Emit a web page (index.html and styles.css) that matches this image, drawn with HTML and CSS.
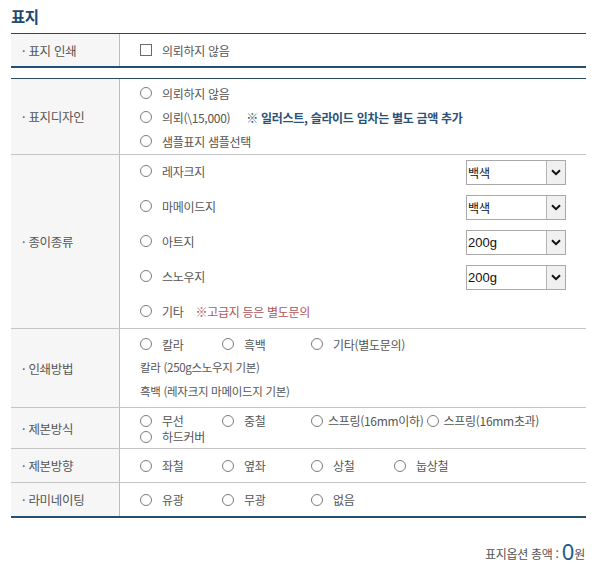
FILE: index.html
```html
<!DOCTYPE html>
<html lang="ko">
<head>
<meta charset="utf-8">
<title>표지</title>
<link rel="stylesheet" href="styles.css">
</head>
<body>
<div class="wrap">
  <h2 class="title">표지</h2>

  <div class="tbl tbl-top">
    <div class="row row-print">
      <div class="th">· 표지 인쇄</div>
      <div class="td">
        <label class="opt"><input type="checkbox" class="chk">의뢰하지 않음</label>
      </div>
    </div>
  </div>

  <div class="tbl tbl-main">
    <div class="row row-design">
      <div class="th">· 표지디자인</div>
      <div class="td col">
        <label class="opt line24"><input type="radio" name="design" class="rd">의뢰하지 않음</label>
        <div class="line24"><label class="opt"><input type="radio" name="design" class="rd">의뢰(\15,000)</label><span class="note-blue">※ 일러스트, 슬라이드 임차는 별도 금액 추가</span></div>
        <label class="opt line24"><input type="radio" name="design" class="rd">샘플표지 샘플선택</label>
      </div>
    </div>

    <div class="row row-paper">
      <div class="th">· 종이종류</div>
      <div class="td col paper">
        <div class="paper-line">
          <label class="opt"><input type="radio" name="paper" class="rd">레자크지</label>
          <div class="sel"><span class="sel-val">백색</span><span class="sel-btn"><svg width="10" height="7" viewBox="0 0 10 7"><path d="M1 1.2 L5 5.2 L9 1.2" fill="none" stroke="#111" stroke-width="2"/></svg></span></div>
        </div>
        <div class="paper-line">
          <label class="opt"><input type="radio" name="paper" class="rd">마메이드지</label>
          <div class="sel"><span class="sel-val">백색</span><span class="sel-btn"><svg width="10" height="7" viewBox="0 0 10 7"><path d="M1 1.2 L5 5.2 L9 1.2" fill="none" stroke="#111" stroke-width="2"/></svg></span></div>
        </div>
        <div class="paper-line">
          <label class="opt"><input type="radio" name="paper" class="rd">아트지</label>
          <div class="sel"><span class="sel-val num">200g</span><span class="sel-btn"><svg width="10" height="7" viewBox="0 0 10 7"><path d="M1 1.2 L5 5.2 L9 1.2" fill="none" stroke="#111" stroke-width="2"/></svg></span></div>
        </div>
        <div class="paper-line">
          <label class="opt"><input type="radio" name="paper" class="rd">스노우지</label>
          <div class="sel"><span class="sel-val num">200g</span><span class="sel-btn"><svg width="10" height="7" viewBox="0 0 10 7"><path d="M1 1.2 L5 5.2 L9 1.2" fill="none" stroke="#111" stroke-width="2"/></svg></span></div>
        </div>
        <div class="paper-line">
          <label class="opt"><input type="radio" name="paper" class="rd">기타</label><span class="note-red">※고급지 등은 별도문의</span>
        </div>
      </div>
    </div>

    <div class="row row-method">
      <div class="th">· 인쇄방법</div>
      <div class="td col">
        <div class="opts method-opts">
          <label class="opt"><input type="radio" name="method" class="rd">칼라</label>
          <label class="opt"><input type="radio" name="method" class="rd">흑백</label>
          <label class="opt"><input type="radio" name="method" class="rd">기타(별도문의)</label>
        </div>
        <div class="desc">칼라 (250g스노우지 기본)</div>
        <div class="desc">흑백 (레자크지 마메이드지 기본)</div>
      </div>
    </div>

    <div class="row row-bind">
      <div class="th">· 제본방식</div>
      <div class="td">
        <div class="opts bind-opts">
          <label class="opt"><input type="radio" name="bind" class="rd">무선</label>
          <label class="opt"><input type="radio" name="bind" class="rd">중철</label>
          <label class="opt tight"><input type="radio" name="bind" class="rd">스프링(16mm이하)</label>
          <label class="opt tight"><input type="radio" name="bind" class="rd">스프링(16mm초과)</label>
          <label class="opt"><input type="radio" name="bind" class="rd">하드커버</label>
        </div>
      </div>
    </div>

    <div class="row row-single">
      <div class="th">· 제본방향</div>
      <div class="td">
        <div class="opts">
          <label class="opt"><input type="radio" name="dir" class="rd">좌철</label>
          <label class="opt"><input type="radio" name="dir" class="rd">옆좌</label>
          <label class="opt"><input type="radio" name="dir" class="rd">상철</label>
          <label class="opt"><input type="radio" name="dir" class="rd">눕상철</label>
        </div>
      </div>
    </div>

    <div class="row row-single">
      <div class="th">· 라미네이팅</div>
      <div class="td">
        <div class="opts">
          <label class="opt"><input type="radio" name="lami" class="rd">유광</label>
          <label class="opt"><input type="radio" name="lami" class="rd">무광</label>
          <label class="opt"><input type="radio" name="lami" class="rd">없음</label>
        </div>
      </div>
    </div>
  </div>

  <div class="total">표지옵션 총액 : <strong class="total-num">0</strong>원</div>
</div>
</body>
</html>
```

FILE: styles.css
```css
html, body {
  margin: 0;
  padding: 0;
  background: #fff;
}
body {
  font-family: "Noto Sans CJK KR", "Noto Sans", sans-serif;
  font-size: 12px;
  color: #555;
  letter-spacing: -0.3px;
}
.wrap {
  width: 575px;
  margin-left: 11px;
}
.title {
  margin: 0;
  padding-top: 6px;
  height: 27px;
  font-size: 15.5px;
  line-height: 20px;
  font-weight: bold;
  color: #1f4a70;
  letter-spacing: -0.5px;
}
.tbl {
  border-top: 1px solid #2a4a62;
  border-bottom: 2px solid #234f70;
}
.tbl-main {
  margin-top: 10px;
}
.row {
  display: grid;
  grid-template-columns: 109px 1fr;
  border-bottom: 1px solid #c4c4c4;
}
.row:last-child {
  border-bottom: none;
}
.th {
  background: #f6f6f6;
  border-right: 1px solid #bdbdbd;
  display: flex;
  align-items: center;
  padding-left: 11px;
  color: #555;
  font-size: 12.5px;
}
.td {
  padding: 0 20px 0 20px;
  display: flex;
  align-items: center;
}
.td.col {
  flex-direction: column;
  align-items: stretch;
  justify-content: center;
}
.row-print .td {
  height: 32px;
}
.opt {
  display: inline-flex;
  align-items: center;
  white-space: nowrap;
}
.rd, .chk {
  appearance: none;
  -webkit-appearance: none;
  margin: 0 10px 0 0;
  width: 12px;
  height: 12px;
  border: 1px solid #7c7c7c;
  background: #fff;
  flex: none;
  box-sizing: border-box;
}
.rd {
  border-radius: 50%;
}
.chk {
  width: 12px;
  height: 12px;
  border-color: #6a6a6a;
  margin-right: 10px;
}

/* design row */
.row-design .td {
  padding-top: 2px;
  padding-bottom: 1px;
}
.line24 {
  height: 24px;
  display: flex;
  align-items: center;
}
.note-blue {
  margin-left: 16px;
  color: #2b5277;
  font-weight: bold;
  letter-spacing: -0.3px;
}

/* paper row */
.paper {
  padding-top: 4px;
  padding-bottom: 5px;
  gap: 11px;
}
.paper-line {
  height: 24px;
  display: flex;
  align-items: center;
  justify-content: space-between;
}
.paper-line:last-child {
  justify-content: flex-start;
}
.note-red {
  margin-left: 12px;
  color: #b05555;
}
.sel {
  width: 100px;
  height: 25px;
  box-sizing: border-box;
  border: 1px solid #a9a9a9;
  display: flex;
  background: #fff;
  margin-top: 2px;
}
.sel-val {
  flex: 1;
  display: flex;
  align-items: center;
  padding-left: 1px;
  font-family: "DejaVu Sans", "Noto Sans CJK KR", sans-serif;
  font-size: 12px;
  color: #111;
  letter-spacing: 0;
}
.sel-val.num {
  font-family: "Liberation Sans", Arial, sans-serif;
  font-size: 13px;
}
.sel-btn {
  width: 18px;
  border-left: 1px solid #b5b5b5;
  background: #f0f0f0;
  display: flex;
  align-items: center;
  justify-content: center;
}

/* multi options */
.opts {
  display: flex;
  flex-wrap: wrap;
}
.opts .opt {
  min-width: 82px;
}
.opts .opt:nth-child(2) {
  min-width: 89px;
}
.opts .opt:nth-child(3) {
  min-width: 83px;
}
.opts .opt.tight {
  min-width: 0;
  margin-right: 3px;
}
.opts .opt.tight .rd {
  margin-right: 5px;
}

.row-method .td {
  padding-top: 4px;
  padding-bottom: 4px;
}
.method-opts {
  height: 22px;
  align-items: center;
}
.desc {
  height: 24px;
  display: flex;
  align-items: center;
  font-size: 11.5px;
}

.row-bind .td {
  padding-top: 5px;
  padding-bottom: 3px;
}
.bind-opts {
  line-height: 16px;
}
.bind-opts .opt {
  height: 16px;
}

.row-single .td {
  height: 33px;
}

.total {
  margin-top: 21px;
  text-align: right;
  padding-right: 1px;
  font-size: 12px;
  color: #555;
  line-height: 24px;
}
.total-num {
  font-family: "Noto Sans", "Open Sans", sans-serif;
  font-size: 22px;
  font-weight: normal;
  color: #1d5a8c;
  vertical-align: -1px;
  letter-spacing: 0;
}
```
